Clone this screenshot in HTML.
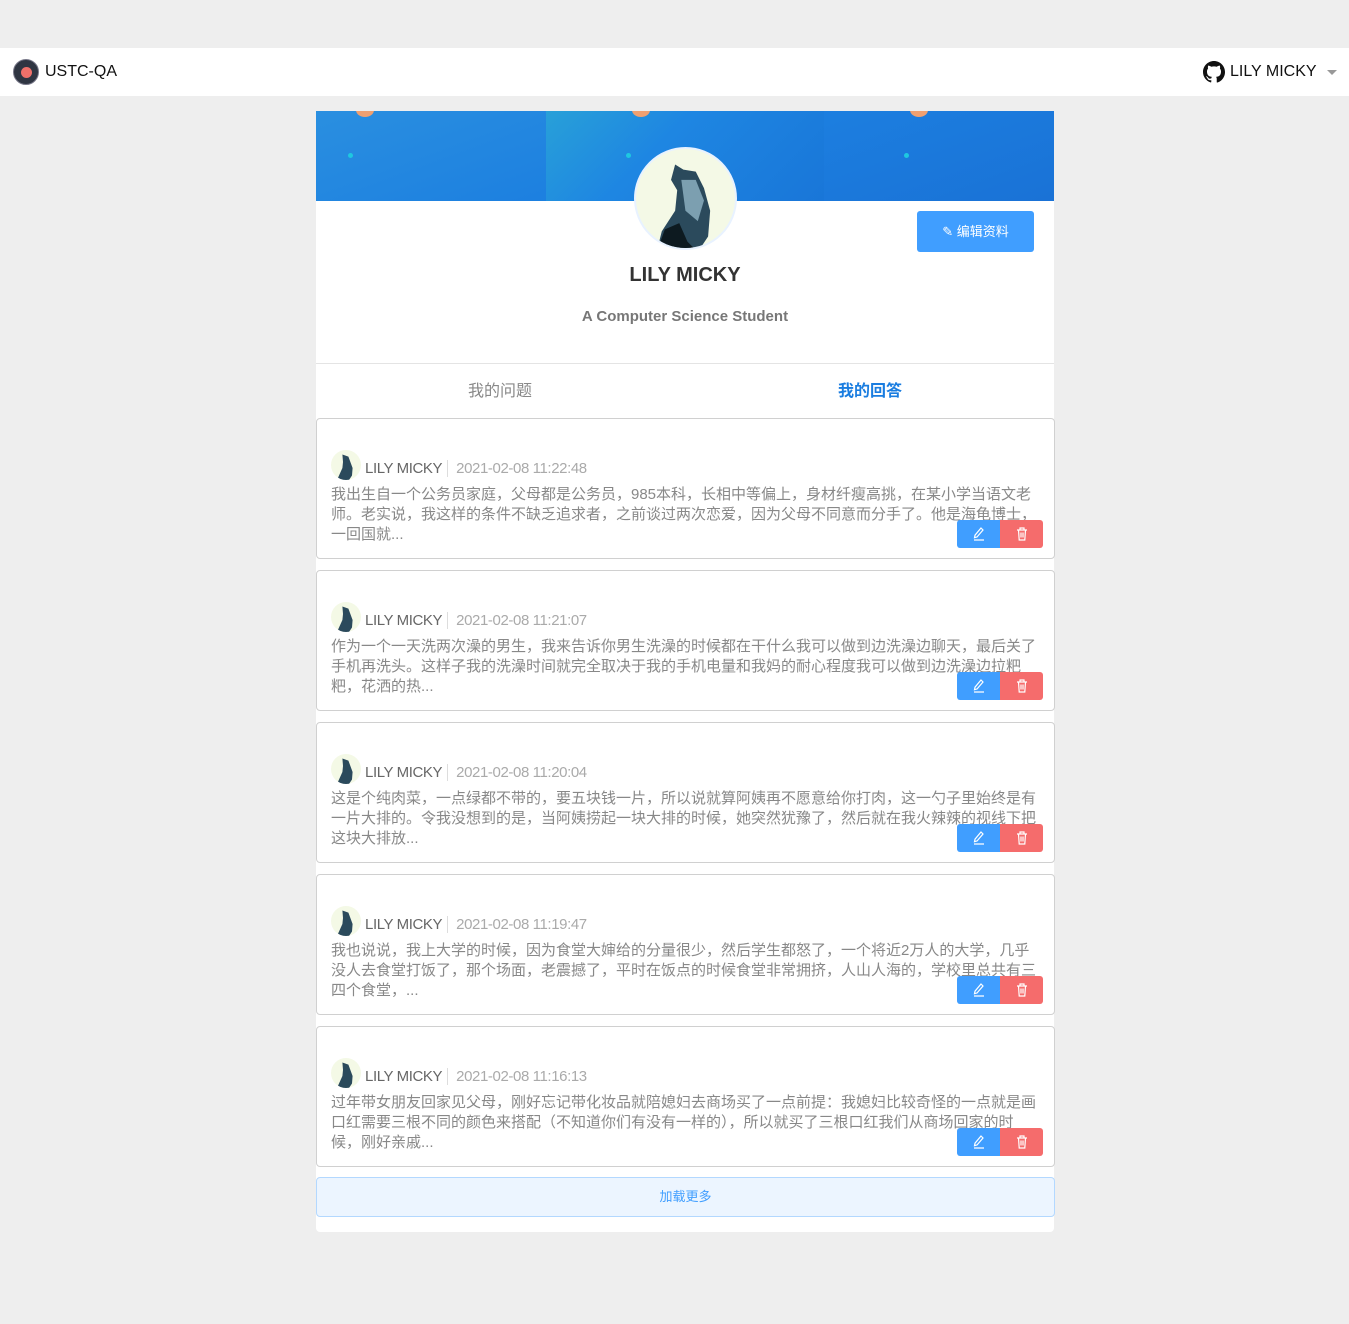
<!DOCTYPE html>
<html><head><meta charset="utf-8"><style>
*{box-sizing:border-box;margin:0;padding:0}
body{width:1349px;height:1324px;background:#eee;font-family:"Liberation Sans","Noto Sans CJK SC",sans-serif;position:relative;overflow:hidden}
.nav{position:absolute;top:48px;left:0;width:1349px;height:48px;background:#fff}
.logo{position:absolute;left:13px;top:11px;width:26px;height:26px;border-radius:50%;background:#2f3542;border:1px solid #778}
.logo:after{content:"";position:absolute;left:7px;top:7px;width:11px;height:11px;border-radius:50%;background:#f0706a}
.brand{position:absolute;left:45px;top:15px;font-size:16px;color:#111}
.user{position:absolute;left:1230px;top:15px;font-size:16px;color:#111}
.caret{position:absolute;left:1327px;top:22px;border:5px solid transparent;border-top-color:#999}
.wrap{position:absolute;left:316px;top:111px;width:738px;height:1121px;background:#fff;border-radius:0 0 4px 4px}
.banner{position:absolute;left:0;top:0;width:738px;height:90px;background:linear-gradient(160deg,#2a8fe0,#1c7fe0 50%,#1a72d6);overflow:hidden}
.seg{position:absolute;top:0;height:90px;background:linear-gradient(135deg,#28a0d8 0%,#1e86e2 40%,#1976d8 100%)}
.av{position:absolute;left:318px;top:36px;width:103px;height:103px;border-radius:50%;background:#f4f9e6;border:2px solid #e8f2ff;overflow:hidden}
.edit{position:absolute;left:601px;top:100px;width:117px;height:41px;background:#409eff;border-radius:3px;color:#fff;font-size:13px;text-align:center;line-height:41px}
.name{position:absolute;left:0;width:738px;top:153px;text-align:center;font-weight:bold;font-size:20px;color:#333}
.sub{position:absolute;left:0;width:738px;top:197px;text-align:center;font-weight:bold;font-size:15px;color:#777}
.tabs{position:absolute;left:0;top:252px;width:738px;height:54px;border-top:1px solid #e4e4e4}
.tab{position:absolute;top:13px;font-size:16px}
.card{position:absolute;left:0;width:739px;height:141px;border:1px solid #d0d0d0;border-radius:4px;background:#fff}
.ca{position:absolute;left:14px;top:31px;width:30px;height:30px;border-radius:50%;background:#f4f9e6;overflow:hidden}
.meta{position:absolute;left:48px;top:41px;font-size:15px;color:#666;white-space:nowrap;letter-spacing:-0.4px}
.meta span{color:#aaa;border-left:1px solid #ddd;padding-left:8px;margin-left:5px}
.txt{position:absolute;left:14px;top:66px;font-size:15px;line-height:20px;color:#888;white-space:nowrap}
.b1,.b2{position:absolute;top:101px;width:43px;height:28px;text-align:center;padding-top:7px}
.b1{left:640px;background:#409eff;border-radius:3px 0 0 3px}
.b2{left:683px;background:#f56c6c;border-radius:0 3px 3px 0}
.more{position:absolute;left:0;top:1066px;width:739px;height:40px;background:#ecf5ff;border:1px solid #b3d8ff;border-radius:4px;color:#409eff;font-size:13px;text-align:center;line-height:38px}
</style></head><body>
<div class="nav"><div class="logo"></div><div class="brand">USTC-QA</div>
<svg style="position:absolute;left:1203px;top:13px" width="22" height="22" viewBox="0 0 16 16"><path fill="#111" d="M8 0C3.58 0 0 3.58 0 8c0 3.54 2.29 6.530 5.47 7.59.4.07.55-.17.55-.38v-1.33c-2.23.48-2.7-1.070-2.7-1.070-.36-.92-.89-1.17-.89-1.17-.73-.5.05-.49.05-.49.8.06 1.23.83 1.23.83.72 1.22 1.87.87 2.33.67.07-.52.28-.87.51-1.070-1.78-.2-3.65-.89-3.65-3.95 0-.87.31-1.59.82-2.15-.08-.2-.36-1.02.08-2.12 0 0 .67-.21 2.2.82a7.6 7.6 0 0 1 4 0c1.53-1.04 2.2-.82 2.2-.82.44 1.1.16 1.92.08 2.12.51.56.82 1.27.82 2.15 0 3.07-1.87 3.75-3.65 3.95.29.25.54.73.54 1.48v2.2c0 .21.15.46.55.38A8 8 0 0 0 16 8c0-4.42-3.58-8-8-8z"/></svg>
<div class="user">LILY MICKY</div><div class="caret"></div></div>
<div class="wrap">
<div class="banner">
<div class="seg" style="left:230px;width:278px"></div>
<div style="position:absolute;left:32px;top:42px;width:5px;height:5px;border-radius:50%;background:#1ec8e0"></div>
<div style="position:absolute;left:310px;top:42px;width:5px;height:5px;border-radius:50%;background:#1ec8e0"></div>
<div style="position:absolute;left:588px;top:42px;width:5px;height:5px;border-radius:50%;background:#1ec8e0"></div>
<div style="position:absolute;left:40px;top:-8px;width:18px;height:14px;border-radius:50%;background:#f0a070"></div>
<div style="position:absolute;left:316px;top:-8px;width:18px;height:14px;border-radius:50%;background:#f0a070"></div>
<div style="position:absolute;left:594px;top:-8px;width:18px;height:14px;border-radius:50%;background:#f0a070"></div>
</div>
<div class="av"><svg width="103" height="103" viewBox="0 0 100 100"><path d="M38 15 L46 20 L58 22 L66 38 L72 60 L70 85 L60 100 L20 100 L25 80 L38 60 L40 40 L34 30 Z" fill="#2b4a5c"/><path d="M44 30 L58 30 L66 50 L60 70 L48 60 Z" fill="#7c9fb0"/><path d="M20 100 L28 78 L42 72 L50 90 L60 100Z" fill="#0d1a20"/></svg></div>
<div class="edit">✎ 编辑资料</div>
<div class="name">LILY MICKY</div>
<div class="sub">A Computer Science Student</div>
<div class="tabs"><div class="tab" style="left:152px;color:#888">我的问题</div><div class="tab" style="left:522px;color:#1a7de0;font-weight:bold">我的回答</div></div>

<div class="card" style="top:307px"><div class="ca"><svg width="30" height="30" viewBox="0 0 100 100"><path d="M38 15 L58 22 L72 60 L70 85 L60 100 L20 100 L38 60 L40 40 Z" fill="#2b4a5c"/></svg></div><div class="meta">LILY MICKY<span>2021-02-08 11:22:48</span></div><div class="txt">我出生自一个公务员家庭，父母都是公务员，985本科，长相中等偏上，身材纤瘦高挑，在某小学当语文老<br>师。老实说，我这样的条件不缺乏追求者，之前谈过两次恋爱，因为父母不同意而分手了。他是海龟博士，<br>一回国就...</div><div class="b1"><svg width="12" height="14" viewBox="0 0 12 14" fill="none" stroke="#fff" stroke-width="1.2"><path d="M8 1l2 2-6 7-2.5.7.5-2.5z M1 13h10"/></svg></div><div class="b2"><svg width="12" height="14" viewBox="0 0 12 14" fill="none" stroke="#fff" stroke-width="1.2"><path d="M1 3h10M4 3V1h4v2M2.5 3l.7 10h5.6l.7-10M5 5.5v5M7 5.5v5"/></svg></div></div>

<div class="card" style="top:459px"><div class="ca"><svg width="30" height="30" viewBox="0 0 100 100"><path d="M38 15 L58 22 L72 60 L70 85 L60 100 L20 100 L38 60 L40 40 Z" fill="#2b4a5c"/></svg></div><div class="meta">LILY MICKY<span>2021-02-08 11:21:07</span></div><div class="txt">作为一个一天洗两次澡的男生，我来告诉你男生洗澡的时候都在干什么我可以做到边洗澡边聊天，最后关了<br>手机再洗头。这样子我的洗澡时间就完全取决于我的手机电量和我妈的耐心程度我可以做到边洗澡边拉粑<br>粑，花洒的热...</div><div class="b1"><svg width="12" height="14" viewBox="0 0 12 14" fill="none" stroke="#fff" stroke-width="1.2"><path d="M8 1l2 2-6 7-2.5.7.5-2.5z M1 13h10"/></svg></div><div class="b2"><svg width="12" height="14" viewBox="0 0 12 14" fill="none" stroke="#fff" stroke-width="1.2"><path d="M1 3h10M4 3V1h4v2M2.5 3l.7 10h5.6l.7-10M5 5.5v5M7 5.5v5"/></svg></div></div>

<div class="card" style="top:611px"><div class="ca"><svg width="30" height="30" viewBox="0 0 100 100"><path d="M38 15 L58 22 L72 60 L70 85 L60 100 L20 100 L38 60 L40 40 Z" fill="#2b4a5c"/></svg></div><div class="meta">LILY MICKY<span>2021-02-08 11:20:04</span></div><div class="txt">这是个纯肉菜，一点绿都不带的，要五块钱一片，所以说就算阿姨再不愿意给你打肉，这一勺子里始终是有<br>一片大排的。令我没想到的是，当阿姨捞起一块大排的时候，她突然犹豫了，然后就在我火辣辣的视线下把<br>这块大排放...</div><div class="b1"><svg width="12" height="14" viewBox="0 0 12 14" fill="none" stroke="#fff" stroke-width="1.2"><path d="M8 1l2 2-6 7-2.5.7.5-2.5z M1 13h10"/></svg></div><div class="b2"><svg width="12" height="14" viewBox="0 0 12 14" fill="none" stroke="#fff" stroke-width="1.2"><path d="M1 3h10M4 3V1h4v2M2.5 3l.7 10h5.6l.7-10M5 5.5v5M7 5.5v5"/></svg></div></div>

<div class="card" style="top:763px"><div class="ca"><svg width="30" height="30" viewBox="0 0 100 100"><path d="M38 15 L58 22 L72 60 L70 85 L60 100 L20 100 L38 60 L40 40 Z" fill="#2b4a5c"/></svg></div><div class="meta">LILY MICKY<span>2021-02-08 11:19:47</span></div><div class="txt">我也说说，我上大学的时候，因为食堂大婶给的分量很少，然后学生都怒了，一个将近2万人的大学，几乎<br>没人去食堂打饭了，那个场面，老震撼了，平时在饭点的时候食堂非常拥挤，人山人海的，学校里总共有三<br>四个食堂，...</div><div class="b1"><svg width="12" height="14" viewBox="0 0 12 14" fill="none" stroke="#fff" stroke-width="1.2"><path d="M8 1l2 2-6 7-2.5.7.5-2.5z M1 13h10"/></svg></div><div class="b2"><svg width="12" height="14" viewBox="0 0 12 14" fill="none" stroke="#fff" stroke-width="1.2"><path d="M1 3h10M4 3V1h4v2M2.5 3l.7 10h5.6l.7-10M5 5.5v5M7 5.5v5"/></svg></div></div>

<div class="card" style="top:915px"><div class="ca"><svg width="30" height="30" viewBox="0 0 100 100"><path d="M38 15 L58 22 L72 60 L70 85 L60 100 L20 100 L38 60 L40 40 Z" fill="#2b4a5c"/></svg></div><div class="meta">LILY MICKY<span>2021-02-08 11:16:13</span></div><div class="txt">过年带女朋友回家见父母，刚好忘记带化妆品就陪媳妇去商场买了一点前提：我媳妇比较奇怪的一点就是画<br>口红需要三根不同的颜色来搭配（不知道你们有没有一样的），所以就买了三根口红我们从商场回家的时<br>候，刚好亲戚...</div><div class="b1"><svg width="12" height="14" viewBox="0 0 12 14" fill="none" stroke="#fff" stroke-width="1.2"><path d="M8 1l2 2-6 7-2.5.7.5-2.5z M1 13h10"/></svg></div><div class="b2"><svg width="12" height="14" viewBox="0 0 12 14" fill="none" stroke="#fff" stroke-width="1.2"><path d="M1 3h10M4 3V1h4v2M2.5 3l.7 10h5.6l.7-10M5 5.5v5M7 5.5v5"/></svg></div></div>

<div class="more">加载更多</div>
</div>
</body></html>
